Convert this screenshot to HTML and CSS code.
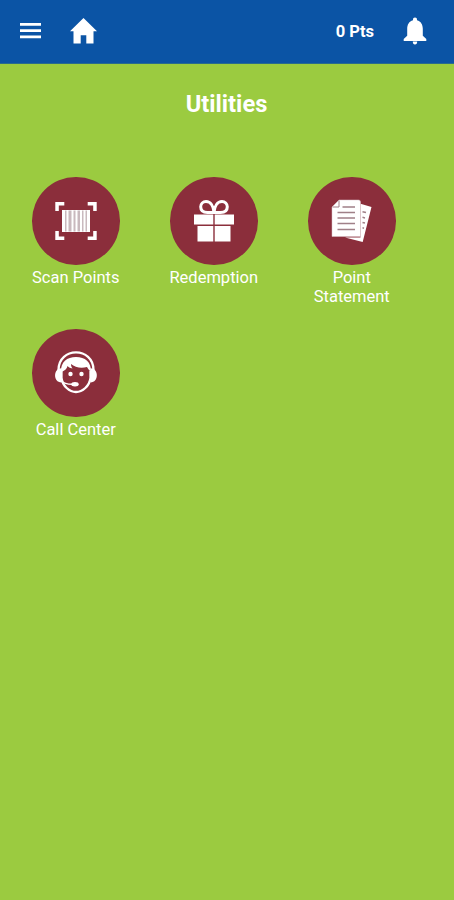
FILE: index.html
```html
<!DOCTYPE html>
<html lang="en">
<head>
   <meta charset="UTF-8">
   <meta name="viewport" content="width=device-width, initial-scale=1.0">
   <title>Utilities</title>
   <link rel="stylesheet" href="styles.css">
</head>
<body>
   <header class="topbar">
      <button class="icon-button menu-button" aria-label="Menu">
         <svg width="22" height="16" viewBox="0 0 22 16"><path d="M0 0h21v2.800H0zM0 6.300h21v2.800H0zM0 12.500h21v2.800H0z"/></svg>
      </button>
      <button class="icon-button" aria-label="Home">
         <svg width="27" height="26" viewBox="0 0 27 26"><path d="M13.500 0L27 13.200H23.500V25.600H16.300V17.200H10.700V25.600H3.500V13.200H0z"/></svg>
      </button>
      <span class="points">0 Pts</span>
      <button class="icon-button" aria-label="Notifications">
         <svg width="24" height="28" viewBox="0 0 24 28"><path d="M12 .500c1.300 0 2 .9 2 2.200v.5c4 1 5.800 4.500 5.800 8.600v7l3.500 3.200v2H.7v-2l3.500-3.200v-7C4.200 7.700 6 4.200 10 3.200v-.5C10 1.400 10.700.5 12 .5zM9.800 24.500h4.400c0 1.900-.7 2.900-2.200 2.900s-2.200-1-2.200-2.900z"/></svg>
      </button>
   </header>
   <main>
      <h1>Utilities</h1>
      <div class="grid">
         <a class="item">
            <span class="circle">
               <svg width="88" height="88" viewBox="0 0 88 88">
                  <path d="M23.300 34V25h9v3.400h-5.500V34zM55.700 25h9v9h-3.500v-5.600h-5.500zM23.300 54h3.500v5.600h5.500V63h-9zM61.200 54h3.500v9h-9v-3.400h5.500z"/>
                  <path d="M30 33h28v22H30z"/>
                  <path class="bars" d="M33 33.500h1.500v21H33zM36.500 33.500h3v21h-3zM41.500 33.500h2v21h-2zM45.500 33.500h2.500v21h-2.500zM50 33.500h1.500v21H50zM53.500 33.500h1.500v21h-1.500z"/>
               </svg>
            </span>
            <span class="label">Scan Points</span>
         </a>
         <a class="item">
            <span class="circle">
               <svg width="88" height="88" viewBox="0 0 88 88">
                  <path d="M24 37.500h19.300v10H24zM44.700 37.500H64v10H44.700zM27.500 49h15.800v15.500H27.500zM44.700 49h15.800v15.500H44.700z"/>
                  <path class="ribbon" d="M44 35.500C43.500 29 40.500 24.500 36 24.500a5.300 5.300 0 0 0-5.300 5.300c0 4.200 3.300 5.700 6.800 5.700zM44 35.500C44.500 29 47.500 24.500 52 24.500a5.300 5.300 0 0 1 5.300 5.300c0 4.200-3.300 5.700-6.800 5.700z"/>
               </svg>
            </span>
            <span class="label">Redemption</span>
         </a>
         <a class="item">
            <span class="circle">
               <svg width="88" height="88" viewBox="0 0 88 88">
                  <path d="M52.500 26.700L63.500 30 54.700 65 37 60.500H52.500z"/>
                  <path class="lines" d="M54.500 34.800l3.500.8M54.500 40.300l2.500.6M54.500 45.500l2.500.6M54.500 50.800l1.500.4"/>
                  <path class="page" d="M31 23H50.500a2 2 0 0 1 2 2V59.500H24V30z"/>
                  <path class="fold" d="M31 23.500V30H24.500"/>
                  <path class="lines" d="M34.500 30H47M29.500 35.500H47M29.500 41H47M29.500 46.500H47M29.500 52.500H47"/>
               </svg>
            </span>
            <span class="label">Point Statement</span>
         </a>
         <a class="item">
            <span class="circle">
               <svg width="88" height="88" viewBox="0 0 88 88">
                  <path class="band" d="M26.500 41C26.500 17.500 61.500 17.500 61.500 41"/>
                  <path d="M29.500 39.300V53.500C21 53.500 21 39.300 29.500 39.300zM58.500 39.300V53.500C67 53.500 67 39.300 58.500 39.300z"/>
                  <path class="face" d="M29.500 42v7c1 8 8 14 14.500 14S57.500 57 58.500 49v-7"/>
                  <path d="M29 43C28.500 33 35 28 44 28S59.500 33 59 43c-2-2-3-3-4-5-6 1.500-12 .5-16-3 0 2 .5 3 1.500 4.500-3-.5-4-1.500-5-2.500-.5 3-3 5-6.500 6z"/>
                  <circle cx="38.500" cy="45" r="2.200"/>
                  <circle cx="49.500" cy="45" r="2.200"/>
                  <path class="mic" d="M29 52c3 2.700 7 3.300 11 3.300"/>
                  <ellipse cx="43" cy="55.200" rx="3.700" ry="2.200"/>
               </svg>
            </span>
            <span class="label">Call Center</span>
         </a>
      </div>
   </main>
</body>
</html>
```

FILE: styles.css
```css
* {
    margin: 0;
    padding: 0;
    box-sizing: border-box;
    font-family: Roboto, sans-serif;
}
body {
    background: #9bcb40;
    color: #fff;
    min-height: 100vh;
}
svg {
    display: block;
    fill: #fff;
}
.topbar {
    background: #0b54a5;
    height: 64px;
    padding: 0 27px 2px 20px;
    display: flex;
    align-items: center;
    border-bottom: 1px solid #2a6c8b;
}
.icon-button {
    background: none;
    border: none;
}
.menu-button {
    margin-right: 27.500px;
}
.points {
    margin-left: auto;
    margin-right: 29px;
    padding-top: 2px;
    font-size: 16.500px;
    font-weight: 700;
}
h1 {
    padding: 25px 1px 1px 0;
    font-size: 23.700px;
    line-height: 30px;
    font-weight: 700;
    text-align: center;
}
.grid {
    display: grid;
    grid-template-columns: repeat(3, 87.500px);
    column-gap: 50.500px;
    grid-auto-rows: 152px;
    padding: 57px 0 0 32px;
}
.item {
    display: flex;
    flex-direction: column;
    align-items: center;
}
.circle {
    width: 87.500px;
    height: 87.500px;
    border-radius: 50%;
    background: #8b2e3b;
}
.label {
    width: 110px;
    padding-top: 3px;
    font-size: 16.500px;
    line-height: 19.500px;
    text-align: center;
}
.bars {
    fill: #c9b9be;
}
.ribbon, .band, .face, .mic {
    fill: none;
    stroke: #fff;
    stroke-width: 3;
}
.band, .face {
    stroke-width: 2.300;
}
.mic {
    stroke-width: 1.500;
}
.page {
    stroke: #d9c3c8;
    stroke-width: .5;
}
.lines, .fold {
    fill: none;
    stroke: #a08088;
    stroke-width: 1.500;
}
.fold {
    stroke-width: 1;
}
```
